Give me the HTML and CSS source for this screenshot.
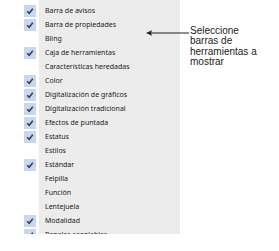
FILE: index.html
```html
<!DOCTYPE html>
<html lang="es">
<head>
<meta charset="utf-8">
<link rel="stylesheet" href="styles.css">
</head>
<body>
<div class="page">
  <div class="menu">
    <div class="row"><span class="check on"><svg viewBox="0 0 12 12"><path d="M3.2 6.3 L5.2 8.3 L8.8 3.8"/></svg></span><span class="label">Barra de avisos</span></div>
    <div class="row"><span class="check on"><svg viewBox="0 0 12 12"><path d="M3.2 6.3 L5.2 8.3 L8.8 3.8"/></svg></span><span class="label">Barra de propiedades</span></div>
    <div class="row"><span class="check"></span><span class="label">Bling</span></div>
    <div class="row"><span class="check on"><svg viewBox="0 0 12 12"><path d="M3.2 6.3 L5.2 8.3 L8.8 3.8"/></svg></span><span class="label">Caja de herramientas</span></div>
    <div class="row"><span class="check"></span><span class="label">Características heredadas</span></div>
    <div class="row"><span class="check on"><svg viewBox="0 0 12 12"><path d="M3.2 6.3 L5.2 8.3 L8.8 3.8"/></svg></span><span class="label">Color</span></div>
    <div class="row"><span class="check on"><svg viewBox="0 0 12 12"><path d="M3.2 6.3 L5.2 8.3 L8.8 3.8"/></svg></span><span class="label">Digitalización de gráficos</span></div>
    <div class="row"><span class="check on"><svg viewBox="0 0 12 12"><path d="M3.2 6.3 L5.2 8.3 L8.8 3.8"/></svg></span><span class="label">Digitalización tradicional</span></div>
    <div class="row"><span class="check on"><svg viewBox="0 0 12 12"><path d="M3.2 6.3 L5.2 8.3 L8.8 3.8"/></svg></span><span class="label">Efectos de puntada</span></div>
    <div class="row"><span class="check on"><svg viewBox="0 0 12 12"><path d="M3.2 6.3 L5.2 8.3 L8.8 3.8"/></svg></span><span class="label">Estatus</span></div>
    <div class="row"><span class="check"></span><span class="label">Estilos</span></div>
    <div class="row"><span class="check on"><svg viewBox="0 0 12 12"><path d="M3.2 6.3 L5.2 8.3 L8.8 3.8"/></svg></span><span class="label">Estándar</span></div>
    <div class="row"><span class="check"></span><span class="label">Felpilla</span></div>
    <div class="row"><span class="check"></span><span class="label">Función</span></div>
    <div class="row"><span class="check"></span><span class="label">Lentejuela</span></div>
    <div class="row"><span class="check on"><svg viewBox="0 0 12 12"><path d="M3.2 6.3 L5.2 8.3 L8.8 3.8"/></svg></span><span class="label">Modalidad</span></div>
    <div class="row"><span class="check on"><svg viewBox="0 0 12 12"><path d="M3.2 6.3 L5.2 8.3 L8.8 3.8"/></svg></span><span class="label">Paneles acoplables</span></div>
  </div>
  <div class="callout">
    <svg class="arrow" viewBox="0 0 44 8" width="44" height="8"><path class="shaft" d="M3 4 H43"/><path class="head" d="M0 4 L6 1.2 L5 4 L6 6.8 Z"/></svg>
    <p class="note">Seleccione<br>barras de<br>herramientas a<br>mostrar</p>
  </div>
</div>
</body>
</html>
```

FILE: styles.css
```css
html, body {
  margin: 0;
  padding: 0;
  background: #ffffff;
}

.page {
  display: flex;
  align-items: flex-start;
  padding-left: 22px;
}

.menu {
  width: 158px;
  height: 234px;
  overflow: hidden;
  box-sizing: border-box;
  padding-top: 3.5px;
  background: linear-gradient(to right, #ffffff 17px, #ececec 17px);
  font-family: "Noto Sans", "Open Sans", sans-serif;
  font-size: 7px;
  color: #1a1a1a;
}

.row {
  height: 14px;
  display: flex;
  align-items: center;
}

.check {
  width: 12px;
  height: 12px;
  margin-left: 2px;
  margin-right: 9px;
  flex: none;
  display: flex;
}

.check.on {
  background: #c7d7f2;
}

.check svg {
  width: 12px;
  height: 12px;
}

.check path {
  fill: none;
  stroke: #3a4050;
  stroke-width: 1.6;
}

.label {
  white-space: nowrap;
}

.callout {
  display: flex;
  align-items: flex-start;
  margin-left: -34px;
  margin-top: 29px;
}

.arrow {
  flex: none;
}

.shaft {
  stroke: #222222;
  stroke-width: 1;
  fill: none;
}

.head {
  fill: #222222;
}

.note {
  margin: -3px 0 0 0;
  font-family: "Liberation Sans", Arial, sans-serif;
  font-size: 10px;
  line-height: 10.4px;
  color: #222222;
}
```
